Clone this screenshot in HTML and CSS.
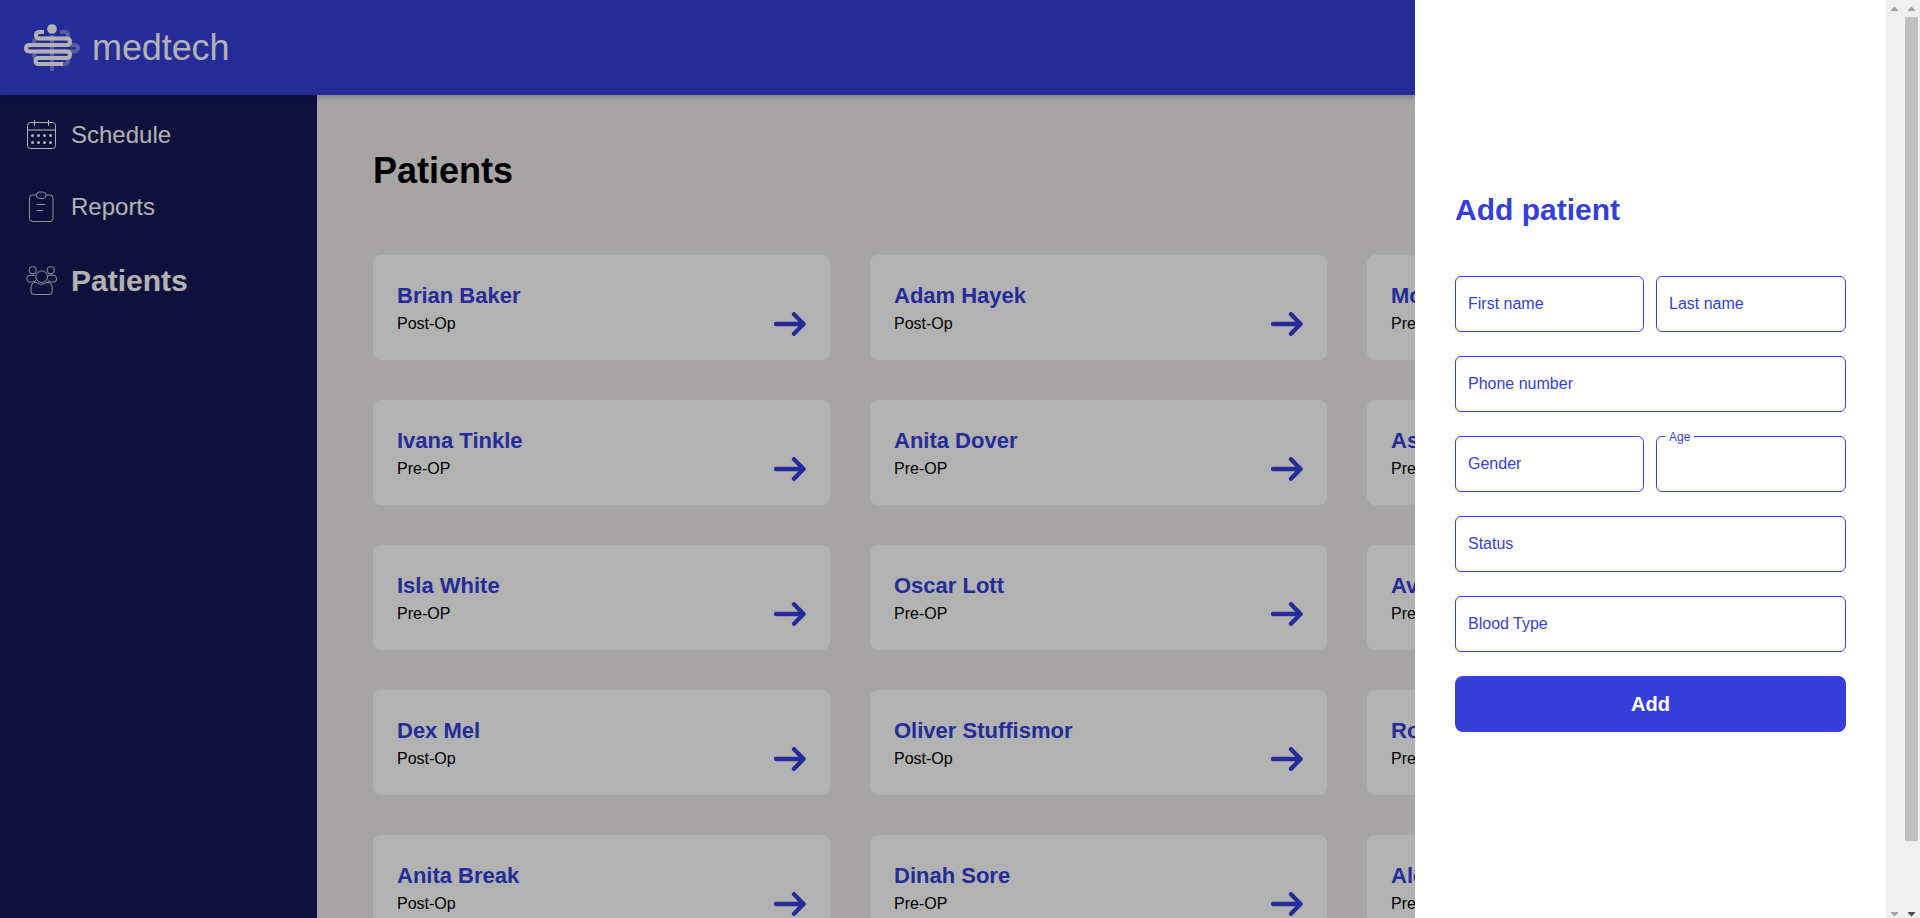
FILE: index.html
```
<!DOCTYPE html>
<html lang="en">
<head>
<meta charset="utf-8">
<title>medtech</title>
<link rel="stylesheet" href="styles.css">
</head>
<body>
<svg width="0" height="0" class="defs">
  <symbol id="arrow" viewBox="0 0 32 24"><path d="M2 12H29M20 2.2L29.6 12L20 21.8" fill="none" stroke="currentColor" stroke-width="4.3" stroke-linecap="round" stroke-linejoin="round"/></symbol>
</svg>
<div class="app">
  <header class="header">
    <svg class="logo" viewBox="0 0 56 48">
      <g fill="none" stroke="#fff" stroke-opacity=".36" stroke-width="4">
        <path d="M28 11V47"/>
        <path d="M36 8H41Q44 8 44 11Q44 14.5 41 14.5H14Q10 14.5 10 18Q10 21 14 21H49Q54 21 54 24Q54 27.500 49 27.500H14Q10 27.500 10 30.500Q10 34 14 34H41Q44 34 44 37Q44 40 41 40H14"/>
      </g>
      <g fill="none" stroke="#fff" stroke-width="4">
        <path d="M20 8H15.500Q12 8 12 11Q12 14.500 15.500 14.500H42.500Q46 14.500 46 17.700Q46 21 42.500 21H6Q2 21 2 24.200Q2 27.500 6 27.500H42.500Q46 27.500 46 30.700Q46 34 42.500 34H15Q11.500 34 11.500 37Q11.500 40 15 40H39"/>
      </g>
      <circle cx="28" cy="5" r="4.800" fill="#fff"/>
    </svg>
    <span class="brand">medtech</span>
  </header>
  <div class="body">
    <nav class="sidebar">
      <a class="nav-item"><svg class="nav-icon" viewBox="0 0 32 32" fill="none" stroke="#fff"><rect x="2.500" y="3.500" width="28" height="26" rx="3"/><path d="M9.500 1V7M23.500 1V7"/><path d="M2.500 11H30.500" stroke-width="2" stroke-opacity=".55"/><path d="M7.500 16.500h.01M13.500 16.500h.01M19.500 16.500h.01M25.500 16.500h.01M7.500 23.500h.01M13.500 23.500h.01M19.500 23.500h.01M25.500 23.500h.01" stroke-width="3" stroke-linecap="round"/></svg>Schedule</a>
      <a class="nav-item"><svg class="nav-icon" viewBox="0 0 32 32" fill="none" stroke="#fff" stroke-opacity=".8"><path d="M11.500 4H7.500Q4.500 4 4.500 7V27.500Q4.500 30.500 7.500 30.500H25Q28 30.500 28 27.500V7Q28 4 25 4H21"/><rect x="11.500" y="1" width="9.500" height="6.500" rx="3.200"/><path d="M11.500 13.500H20M11.500 19.500H18"/></svg>Reports</a>
      <a class="nav-item active"><svg class="nav-icon" viewBox="0 0 32 32" fill="none" stroke="#fff" stroke-opacity=".8"><circle cx="16.700" cy="11.700" r="5.800"/><circle cx="7.700" cy="5.200" r="3.700"/><circle cx="25.700" cy="5.200" r="3.700"/><path d="M10.500 10.200H4.500Q1.800 10.500 1.800 14Q1.800 17 4.500 17H7.500Q9.500 17 11 15M23 10.200H29Q31.500 10.500 31.500 14Q31.500 17 29 17H26Q24 17 22.500 15"/><path d="M11 17.200Q6 17.500 6 23V26.500Q6 29.500 9 29.500H24Q27.200 29.500 27.200 26.500V23Q27.200 17.500 22 17.200Q16.500 21.500 11 17.200Z"/></svg>Patients</a>
    </nav>
    <main class="content">
      <h1 class="title">Patients</h1>
      <section class="grid">
        <article class="card"><h2 class="name">Brian Baker</h2><p class="status">Post-Op</p><svg class="arrow"><use href="#arrow"/></svg></article>
        <article class="card"><h2 class="name">Adam Hayek</h2><p class="status">Post-Op</p><svg class="arrow"><use href="#arrow"/></svg></article>
        <article class="card"><h2 class="name">Mo</h2><p class="status">Pre</p></article>
        <article class="card"><h2 class="name">Ivana Tinkle</h2><p class="status">Pre-OP</p><svg class="arrow"><use href="#arrow"/></svg></article>
        <article class="card"><h2 class="name">Anita Dover</h2><p class="status">Pre-OP</p><svg class="arrow"><use href="#arrow"/></svg></article>
        <article class="card"><h2 class="name">As</h2><p class="status">Pre</p></article>
        <article class="card"><h2 class="name">Isla White</h2><p class="status">Pre-OP</p><svg class="arrow"><use href="#arrow"/></svg></article>
        <article class="card"><h2 class="name">Oscar Lott</h2><p class="status">Pre-OP</p><svg class="arrow"><use href="#arrow"/></svg></article>
        <article class="card"><h2 class="name">Av</h2><p class="status">Pre</p></article>
        <article class="card"><h2 class="name">Dex Mel</h2><p class="status">Post-Op</p><svg class="arrow"><use href="#arrow"/></svg></article>
        <article class="card"><h2 class="name">Oliver Stuffismor</h2><p class="status">Post-Op</p><svg class="arrow"><use href="#arrow"/></svg></article>
        <article class="card"><h2 class="name">Ro</h2><p class="status">Pre</p></article>
        <article class="card"><h2 class="name">Anita Break</h2><p class="status">Post-Op</p><svg class="arrow"><use href="#arrow"/></svg></article>
        <article class="card"><h2 class="name">Dinah Sore</h2><p class="status">Pre-OP</p><svg class="arrow"><use href="#arrow"/></svg></article>
        <article class="card"><h2 class="name">Ale</h2><p class="status">Pre</p></article>
      </section>
    </main>
  </div>
</div>
<div class="overlay">
  <form class="panel">
    <h2 class="panel-title">Add patient</h2>
    <div class="fields">
      <label class="field">First name</label>
      <label class="field">Last name</label>
      <label class="field wide">Phone number</label>
      <label class="field">Gender</label>
      <label class="field"><span class="notch">Age</span></label>
      <label class="field wide">Status</label>
      <label class="field wide">Blood Type</label>
      <button class="submit wide" type="button">Add</button>
    </div>
  </form>
  <div class="scrollbar">
    <svg class="cap" viewBox="0 0 17 17" fill="#a3a3a3"><path d="M5 11V10L8.500 6.500L12 10V11Z"/></svg>
    <svg class="cap" viewBox="0 0 17 17" fill="#a3a3a3"><path d="M5 11V12L8.500 15.500L12 12V11Z"/></svg>
  </div>
  <div class="scrollbar">
    <svg class="cap" viewBox="0 0 17 17" fill="#a3a3a3"><path d="M5 11V10L8.500 6.500L12 10V11Z"/></svg>
    <div class="thumb"></div>
    <svg class="cap" viewBox="0 0 17 17" fill="#505050"><path d="M5 11V12L8.500 15.500L12 12V11Z"/></svg>
  </div>
</div>
</body>
</html>
```
FILE: styles.css
```
* { box-sizing: border-box; margin: 0; }
body { height: 918px; overflow: hidden; font-family: "Liberation Sans", Arial, sans-serif; font-size: 16px; }
.defs { position: absolute; }
.app { height: 918px; overflow: hidden; display: flex; flex-direction: column; }
.header { flex: none; height: 95px; background: #353fd9; color: #fff; display: flex; align-items: center; padding-left: 24px; gap: 12px; box-shadow: 0 0 8px rgba(0,0,0,.35); position: relative; }
.logo { width: 56px; height: 48px; }
.brand { font-size: 36px; line-height: 41px; letter-spacing: -0.1px; }
.body { flex: 1; min-height: 0; display: flex; }
.sidebar { flex: none; width: 317px; background: #161957; color: #fff; padding: 24px 0 0 25px; display: flex; flex-direction: column; gap: 40px; }
.nav-item { display: flex; align-items: center; gap: 14px; height: 32px; font-size: 24px; }
.nav-item.active { font-size: 30px; font-weight: bold; height: 34px; margin-top: 1px; }
.nav-icon { width: 32px; height: 32px; }
.content { flex: 1; background: #eeebec; padding: 55px 56px 0; overflow: hidden; }
.title { font-size: 36px; line-height: 41px; margin-bottom: 64px; }
.grid { display: grid; grid-template-columns: repeat(3, 457px); grid-auto-rows: 105px; gap: 40px; }
.card { background: #fff; border-radius: 8px; padding: 28px 24px 24px; display: grid; grid-template-columns: 1fr 32px; grid-template-rows: 25px 18px; row-gap: 7px; }
.name { grid-column: 1 / 3; font-size: 22px; line-height: 25px; color: #353fd9; }
.status { line-height: 18px; }
.arrow { width: 32px; height: 24px; margin-top: -3px; color: #353fd9; }
.overlay { position: absolute; inset: 0; display: flex; justify-content: flex-end; background: rgba(0,0,0,.3); }
.panel { width: 471px; background: #fff; color: #353fd9; padding: 193px 40px 0; }
.panel-title { font-size: 30px; line-height: 34px; margin-bottom: 49px; }
.fields { display: grid; grid-template-columns: 189px 190px; grid-auto-rows: 56px; gap: 24px 12px; }
.field { position: relative; border: 1px solid #353fd9; border-radius: 6px; padding: 0 12px; display: flex; align-items: center; line-height: 18px; }
.wide { grid-column: 1 / 3; }
.notch { position: absolute; left: 8px; top: -7px; padding: 0 4px; background: #fff; font-size: 12px; line-height: 14px; }
.submit { border: 0; border-radius: 8px; background: #353fd9; color: #fff; font: bold 20px "Liberation Sans", Arial, sans-serif; }
.scrollbar { width: 17px; background: #f0f0f0; display: flex; flex-direction: column; justify-content: space-between; }
.cap { width: 17px; height: 17px; flex: none; }
.thumb { width: 13px; height: 824px; margin: 0 2px auto; background: #c0c0c0; }
```
